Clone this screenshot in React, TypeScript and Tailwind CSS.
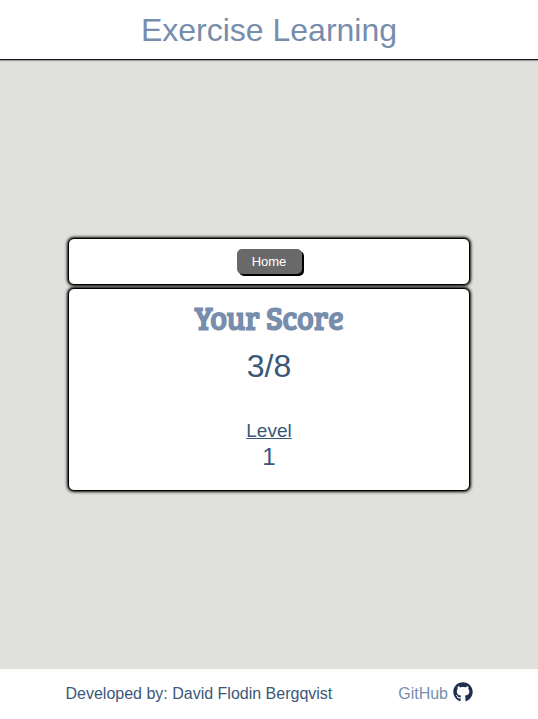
import { FaGithub } from "react-icons/fa";

export default function App() {
  return (
    <div className="flex h-[719px] w-full flex-col overflow-hidden bg-[#e0e1dc] font-['Liberation_Sans',Arial,sans-serif] text-[#3b5778]">
      <header className="relative flex h-[60px] shrink-0 items-center justify-center border-b border-[#161b21] bg-white pt-[2px] shadow-[0_1px_1px_rgba(0,0,0,0.3)]">
        <h1 className="text-[32px] leading-[37px] text-[#778dac]">Exercise Learning</h1>
      </header>
      <main className="flex flex-1 flex-col items-center justify-center gap-[3px]">
        <nav className="flex h-[47px] w-[402px] justify-center rounded-[6px] border border-black bg-white pt-[10px] shadow-[0_0_3px_1px_#000]">
          <button className="h-[25px] w-[65px] rounded-[5px] bg-[#696969] text-[13px] leading-[25px] text-white shadow-[2px_2px_0_#000]">
            Home
          </button>
        </nav>
        <section className="flex h-[203px] w-[402px] flex-col items-center rounded-[6px] border border-black bg-white pt-[7px] shadow-[0_0_3px_1px_#000]">
          <h2 className="h-[44px] font-['Bree_Serif','DejaVu_Serif',serif] text-[32px] leading-[44px] font-bold tracking-[-0.2px] whitespace-nowrap text-[#778dac]">
            Your Score
          </h2>
          <p className="mt-[8px] text-[32px] leading-[37px]">3/8</p>
          <p className="mt-[35px] text-[19px] leading-[22px] underline">Level</p>
          <p className="mt-px text-[24px] leading-[28px]">1</p>
        </section>
      </main>
      <footer className="flex h-[50px] shrink-0 items-center justify-between bg-white pr-[65px] pl-[65.5px]">
        <p className="text-[16px]">Developed by: David Flodin Bergqvist</p>
        <a className="flex items-center gap-[5px] text-[16px] text-[#778dac]">
          GitHub
          <FaGithub className="mb-[5px] size-[20px] text-[#1f2f50]" />
        </a>
      </footer>
    </div>
  );
}
